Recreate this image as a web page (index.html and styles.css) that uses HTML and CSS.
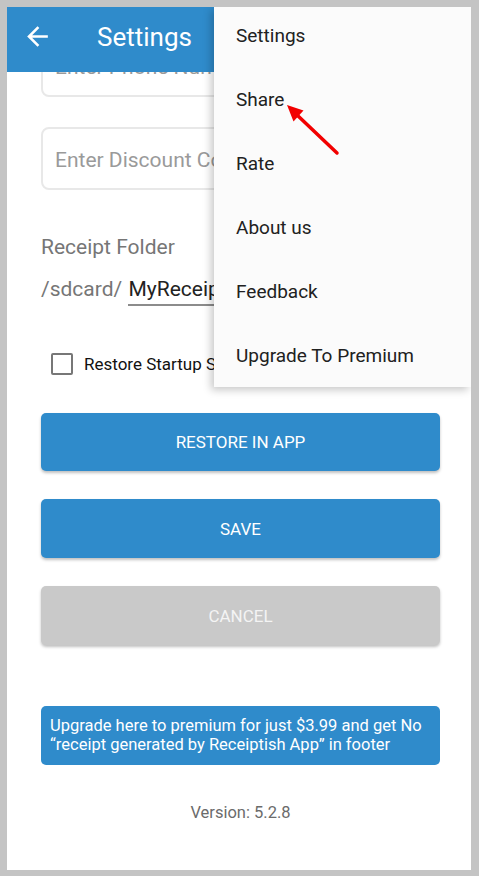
FILE: index.html
```html
<!DOCTYPE html>
<html lang="en">
<head>
    <meta charset="UTF-8">
    <meta name="viewport" content="width=device-width, initial-scale=1.0">
    <title>Settings</title>
    <link rel="stylesheet" href="styles.css">
</head>
<body>

    <div class="screen">
        <div class="app-bar">
            <svg class="back-icon" viewBox="0 0 24 24" width="31" height="31">
                <path d="M20 11H7.83l5.59-5.59L12 4l-8 8 8 8 1.41-1.41L7.83 13H20v-2z" fill="#fff"/>
            </svg>
            <h1 class="title">Settings</h1>
        </div>

        <div class="scroll">
            <div class="content">
                <div class="field"><span class="placeholder">Enter Phone Number</span></div>
                <div class="field gap"><span class="placeholder">Enter Discount Code</span></div>

                <div class="label">Receipt Folder</div>
                <div class="folder-row">
                    <span class="prefix">/sdcard/</span>
                    <span class="folder-input">MyReceipts</span>
                </div>

                <div class="check-row">
                    <span class="checkbox"></span>
                    <span class="check-text">Restore Startup Settings</span>
                </div>

                <button class="btn first">RESTORE IN APP</button>
                <button class="btn">SAVE</button>
                <button class="btn grey">CANCEL</button>

                <div class="upgrade">Upgrade here to premium for just $3.99 and get No “receipt generated by Receiptish App” in footer</div>

                <div class="version">Version: 5.2.8</div>
            </div>
        </div>

        <!-- overflow menu -->
        <div class="menu">
            <div class="menu-item">Settings</div>
            <div class="menu-item">Share</div>
            <div class="menu-item">Rate</div>
            <div class="menu-item">About us</div>
            <div class="menu-item">Feedback</div>
            <div class="menu-item">Upgrade To Premium</div>
        </div>

        <svg class="pointer" viewBox="0 0 70 65" width="70" height="65">
            <line x1="19" y1="17" x2="60" y2="56" stroke="#f20000" stroke-width="3.5" stroke-linecap="round"/>
            <polygon points="10,8 26.5,13.5 16.5,24.5" fill="#f20000"/>
        </svg>
    </div>

</body>
</html>
```

FILE: styles.css
```css
body {
    margin: 0;
    padding: 7px 8px 6px 7px;
    background-color: #c4c4c4;
    font-family: Roboto, "Noto Sans", sans-serif;
}
.screen {
    position: relative;
    height: 863px;
    background-color: white;
    overflow: hidden;
}
.app-bar {
    position: relative;
    z-index: 1;
    height: 65px;
    box-sizing: border-box;
    padding: 0 0 6px 15px;
    background-color: #2f8bcb;
    display: flex;
    align-items: center;
}
.back-icon {
    display: block;
}
.title {
    margin: 0 0 0 44px;
    font-size: 26px;
    font-weight: 400;
    color: white;
}
.scroll {
    height: 798px;
    overflow: hidden;
}
.content {
    margin-top: -38px;
    padding: 0 31px 0 34px;
}
.field {
    height: 63px;
    box-sizing: border-box;
    border: 2px solid #e8e8e8;
    border-radius: 8px;
    display: flex;
    align-items: center;
    padding: 2px 0 0 12px;
}
.field.gap {
    margin-top: 30px;
}
.placeholder {
    font-size: 21px;
    color: #9a9a9a;
}
.label {
    margin-top: 44px;
    font-size: 21px;
    line-height: 26px;
    color: #767676;
}
.folder-row {
    margin-top: 15px;
    font-size: 21px;
    line-height: 28px;
}
.prefix {
    color: #767676;
}
.folder-input {
    display: inline-block;
    margin-left: 1px;
    padding-bottom: 1px;
    border-bottom: 2px solid #8c8c8c;
    color: #222;
    width: 150px;
}
.check-row {
    margin-top: 46px;
    display: flex;
    align-items: center;
    height: 24px;
}
.checkbox {
    width: 22px;
    height: 22px;
    box-sizing: border-box;
    border: 2px solid #777;
    border-radius: 2px;
    margin-left: 10px;
}
.check-text {
    margin-left: 11px;
    font-size: 17px;
    color: #111;
}
.btn {
    display: block;
    width: 100%;
    height: 59px;
    margin-top: 28px;
    border: none;
    border-radius: 5px;
    background-color: #2f8bcb;
    color: white;
    font-family: Roboto, "Noto Sans", sans-serif;
    font-size: 17px;
    box-shadow: 0 2px 3px rgba(0, 0, 0, 0.25);
}
.btn.first {
    margin-top: 37px;
    height: 58px;
}
.btn.grey {
    background-color: #c9c9c9;
    color: #f4f4f4;
}
.upgrade {
    margin-top: 61px;
    padding: 10px 9px;
    height: 59px;
    box-sizing: border-box;
    border-radius: 5px;
    background-color: #2f8bcb;
    color: white;
    font-size: 16.5px;
    line-height: 19px;
}
.version {
    margin-top: 38px;
    text-align: center;
    font-size: 16.5px;
    line-height: 20px;
    color: #6b6b6b;
}
.menu {
    position: absolute;
    z-index: 2;
    top: 0;
    left: 207px;
    right: 0;
    height: 380px;
    overflow: hidden;
    background-color: #fbfbfb;
    box-shadow: -3px 3px 8px rgba(0, 0, 0, 0.22);
}
.menu-item {
    height: 58px;
    line-height: 58px;
    padding: 0 0 6px 22px;
    font-size: 19px;
    color: #212121;
}
.pointer {
    position: absolute;
    z-index: 3;
    left: 270px;
    top: 90px;
}
```
